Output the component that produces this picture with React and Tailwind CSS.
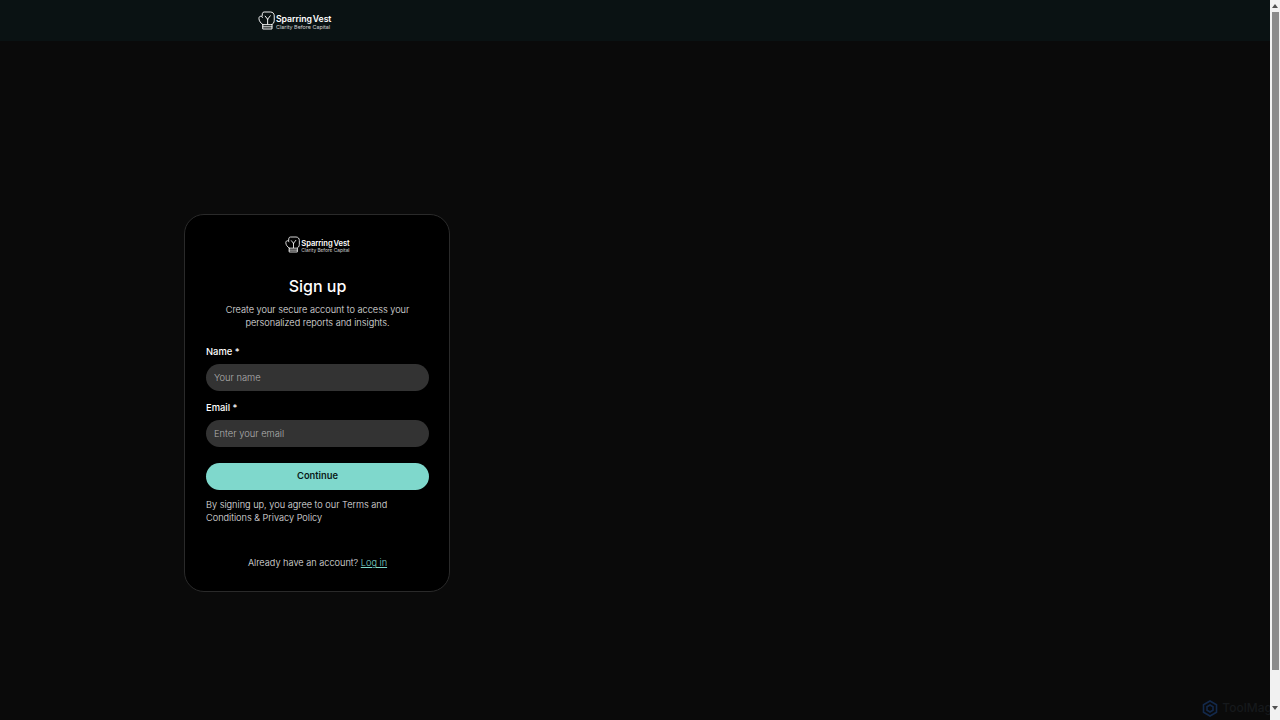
function Glove({ w, h }) {
  return (
    <svg width={w} height={h} viewBox="0 0 18 20" fill="none" stroke="white" strokeWidth="1" strokeLinecap="round" strokeLinejoin="round">
      <path d="M5.2 14.4 C2.8 12.8 1 10.4 1 7.8 C1 6.2 2 5.3 3.2 5.5 C3.9 5.6 4.4 6 4.7 6.8" />
      <path d="M4.3 5.5 L4.7 2.4 C4.9 1.5 5.6 1 6.6 1 H13.2 C15.8 1 17.2 2.8 17.2 5.2 V9.8 C17.2 12.2 15.8 14.4 13.6 14.4 H5.2" />
      <path d="M5 14.4 V19 H14.8 V14.4" />
      <path d="M5 16.7 H14.8" />
      <path d="M10.2 13.8 V8.6 M10.2 8.6 L7.6 5.4 M10.2 8.6 L13 5" />
    </svg>
  );
}

function Logo({ small = false }) {
  return (
    <div className="flex items-center gap-[1px] font-['Inter',sans-serif] text-white">
      {small ? <Glove w={15} h={17} /> : <Glove w={17} h={19} />}
      {small ? (
        <div className="flex flex-col items-start pt-[3px]">
          <span className="text-[7.6px] leading-[9px] font-semibold tracking-[-0.05px] [word-spacing:-1px] whitespace-nowrap">Sparring Vest</span>
          <span className="text-[4.8px] leading-[5px] text-[#d4d4d4] whitespace-nowrap">Clarity Before Capital</span>
        </div>
      ) : (
        <div className="flex flex-col items-start pt-[3px]">
          <span className="text-[8.7px] leading-[10px] font-semibold tracking-[-0.05px] [word-spacing:-1.2px] whitespace-nowrap">Sparring Vest</span>
          <span className="text-[5.4px] leading-[7px] text-[#d4d4d4] whitespace-nowrap">Clarity Before Capital</span>
        </div>
      )}
    </div>
  );
}

function Field({ label, placeholder }) {
  return (
    <div className="flex flex-col">
      <label className="mb-[5px] text-[9.4px] leading-[14px] font-medium text-white">
        {label} <span>*</span>
      </label>
      <input
        placeholder={placeholder}
        className="h-[27px] w-full rounded-full bg-[#333333] px-2 text-[9.33px] font-light text-white placeholder:text-[#b0b0b0] outline-none"
      />
    </div>
  );
}

export default function App() {
  return (
    <div className="flex h-[720px] w-[1280px] overflow-hidden bg-[#0a0a0a] font-['Inter',sans-serif]">
      <div className="relative flex min-w-0 flex-1 flex-col">
        <header className="flex h-[41px] shrink-0 items-center bg-[#0a1213] pl-[258px]">
          <Logo />
        </header>
        <main className="flex flex-1 items-start pl-[184px] pt-[173px]">
          <div className="flex h-[378px] w-[266px] flex-col rounded-[20px] border border-[#2a2a2a] bg-black pt-[21px] pr-[20px] pl-[21px]">
            <div className="flex justify-center">
              <Logo small />
            </div>
            <h1 className="mt-[21px] text-center text-[16px] leading-[24px] font-medium text-white">Sign up</h1>
            <p className="mt-[5px] text-center text-[9.2px] leading-[13.3px] font-light text-[#e5e5e5]">
              Create your secure account to access your personalized reports and insights.
            </p>
            <div className="mt-[15px] flex flex-col gap-[10px]">
              <Field label="Name" placeholder="Your name" />
              <Field label="Email" placeholder="Enter your email" />
            </div>
            <button className="mt-[16px] h-[27px] w-full rounded-full bg-[#7fd8cc] text-[9.33px] font-semibold text-[#0a1a18]">
              Continue
            </button>
            <p className="mt-[8px] text-[9.2px] leading-[13.3px] font-light text-[#e5e5e5]">
              By signing up, you agree to our Terms and Conditions &amp; Privacy Policy
            </p>
            <p className="mt-[32px] text-center text-[9.2px] leading-[13.3px] font-light text-[#e5e5e5]">
              Already have an account? <a className="text-[#7fd8cc] underline">Log in</a>
            </p>
          </div>
        </main>
        <div className="absolute right-[-9px] bottom-[3px] flex items-center gap-[4px]">
          <svg width="16" height="17" viewBox="0 0 16 17" fill="none" stroke="#13294b" strokeWidth="1.6">
            <path d="M8 1 L14.5 4.7 V12.3 L8 16 L1.5 12.3 V4.7 Z" />
            <path d="M8 5 L11 6.8 V10.2 L8 12 L5 10.2 V6.8 Z" />
          </svg>
          <span className="text-[12px] font-medium text-[#16191c]">ToolMage</span>
        </div>
      </div>
      <div className="relative z-10 flex w-[10px] shrink-0 flex-col items-center bg-[#f1f1f1]">
        <div className="mt-[4px] h-0 w-0 border-x-[3px] border-b-[4px] border-x-transparent border-b-[#505050]" />
        <div className="mt-[4px] h-[658px] w-[7px] bg-[#8a8a8a]" />
        <div className="mt-[36px] h-0 w-0 border-x-[3px] border-t-[4px] border-x-transparent border-t-[#505050]" />
      </div>
    </div>
  );
}
